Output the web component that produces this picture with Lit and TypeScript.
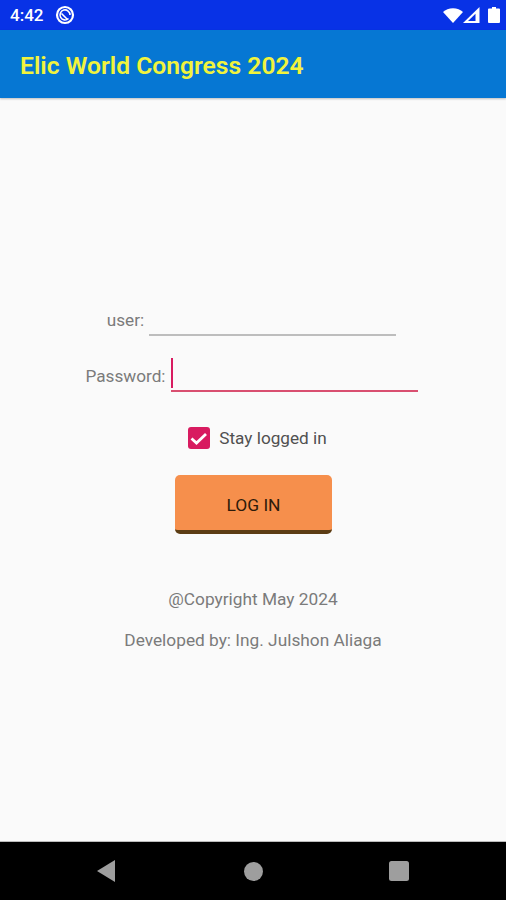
import { LitElement, html, css } from "lit";
import { customElement } from "lit/decorators.js";

@customElement("app-root")
export class AppRoot extends LitElement {
  static styles = css`
    :host {
      display: flex;
      flex-direction: column;
      height: 900px;
      background: #fafafa;
      font-family: Roboto, sans-serif;
      overflow: hidden;
    }
    .status {
      height: 30px;
      flex: none;
      background: #0832e6;
      display: flex;
      align-items: center;
      padding: 0 6px 0 10px;
      color: #fff;
      font-size: 17px;
      font-weight: 500;
    }
    .status .time {
      margin-right: 12px;
    }
    .status .spacer {
      flex: 1;
    }
    .status svg {
      display: block;
    }
    .status .battery {
      margin-left: 8px;
    }
    .toolbar {
      height: 68px;
      flex: none;
      background: #0677d3;
      display: flex;
      align-items: center;
      padding: 3px 0 0 20px;
      box-sizing: border-box;
      color: #f1f33c;
      font-size: 24.65px;
      font-weight: 600;
      box-shadow: 0 1px 2px rgba(0, 0, 0, 0.25);
      z-index: 1;
    }
    main {
      flex: 1;
      display: flex;
      flex-direction: column;
      align-items: center;
      padding-top: 194px;
    }
    .row {
      display: flex;
      align-items: center;
      gap: 5px;
      margin-left: -3px;
      color: #7b7b7b;
      font-size: 17.2px;
    }
    .row + .row {
      margin-top: 12px;
    }
    .row span {
      padding-top: 11px;
    }
    .input {
      width: 247px;
      height: 44px;
      box-sizing: border-box;
      border-bottom: 2px solid #bdbdbd;
    }
    .input.focused {
      border-bottom-color: #d94f70;
      padding-top: 10px;
    }
    .caret {
      width: 2px;
      height: 30px;
      background: #d81b60;
    }
    .check {
      display: flex;
      align-items: center;
      gap: 9px;
      margin: 35px 0 0 9px;
      color: #505050;
      font-size: 17.2px;
    }
    .box {
      width: 22px;
      height: 22px;
      border-radius: 3px;
      background: #d81b60;
      display: block;
    }
    .login {
      width: 157px;
      height: 59px;
      margin: 26px 0 0 1px;
      padding: 4px 0 0;
      box-sizing: border-box;
      border: none;
      border-bottom: 4px solid #5c3d14;
      border-radius: 5px;
      background: #f68f4c;
      color: #2c1a0a;
      font: 400 17.4px Roboto, sans-serif;
    }
    .note {
      color: #7b7b7b;
      font-size: 17.3px;
    }
    .copy {
      margin-top: 55px;
    }
    .dev {
      margin-top: 21px;
    }
    .nav {
      height: 59px;
      flex: none;
      background: #000;
      border-top: 1px solid #bbb;
      box-sizing: border-box;
      display: flex;
      justify-content: space-between;
      align-items: center;
      padding: 0 97px;
    }
    .nav svg {
      display: block;
      fill: #9e9e9e;
    }
  `;

  render() {
    return html`
      <div class="status">
        <span class="time">4:42</span>
        <svg width="20" height="20" viewBox="0 0 20 20" fill="none" stroke="#fff">
          <circle cx="10" cy="10" r="8" stroke-width="2.2"></circle>
          <path d="M13.500 13.500A5 5 0 1 1 15 10M6.500 8.500l6 6" stroke-width="1.6"></path>
        </svg>
        <span class="spacer"></span>
        <svg width="20" height="15" viewBox="0 0 20 15" fill="#fff">
          <path d="M0 4C2.5 1.700 6 .3 10 .3s7.500 1.400 10 3.700L10 15z"></path>
        </svg>
        <svg width="17" height="16" viewBox="0 0 17 16">
          <path d="M0 16 16.500 0v16z" fill="#fff"></path>
          <path d="M5 14 12.500 6.700V14z" fill="#0832e6"></path>
        </svg>
        <svg class="battery" width="12" height="16" viewBox="0 0 12 16" fill="#fff">
          <path d="M4 0h4v1.500h3a1 1 0 0 1 1 1V15a1 1 0 0 1-1 1H1a1 1 0 0 1-1-1V2.500a1 1 0 0 1 1-1h3z"></path>
        </svg>
      </div>
      <div class="toolbar">Elic World Congress 2024</div>
      <main>
        <div class="row">
          <span>user:</span>
          <div class="input"></div>
        </div>
        <div class="row">
          <span>Password:</span>
          <div class="input focused"><div class="caret"></div></div>
        </div>
        <label class="check">
          <svg class="box" viewBox="0 0 22 22">
            <path d="M3.500 11.500 8.500 16 18 7" fill="none" stroke="#fff" stroke-width="2.800"></path>
          </svg>
          <span>Stay logged in</span>
        </label>
        <button class="login">LOG IN</button>
        <div class="note copy">@Copyright May 2024</div>
        <div class="note dev">Developed by: Ing. Julshon Aliaga</div>
      </main>
      <div class="nav">
        <svg width="20" height="22" viewBox="0 0 20 22"><path d="M0 11 18 0v22z"></path></svg>
        <svg width="19" height="19" viewBox="0 0 19 19"><circle cx="9.500" cy="9.500" r="9.500"></circle></svg>
        <svg width="20" height="20" viewBox="0 0 20 20"><rect x="0" y="0" width="20" height="20" rx="2.500"></rect></svg>
      </div>
    `;
  }
}
